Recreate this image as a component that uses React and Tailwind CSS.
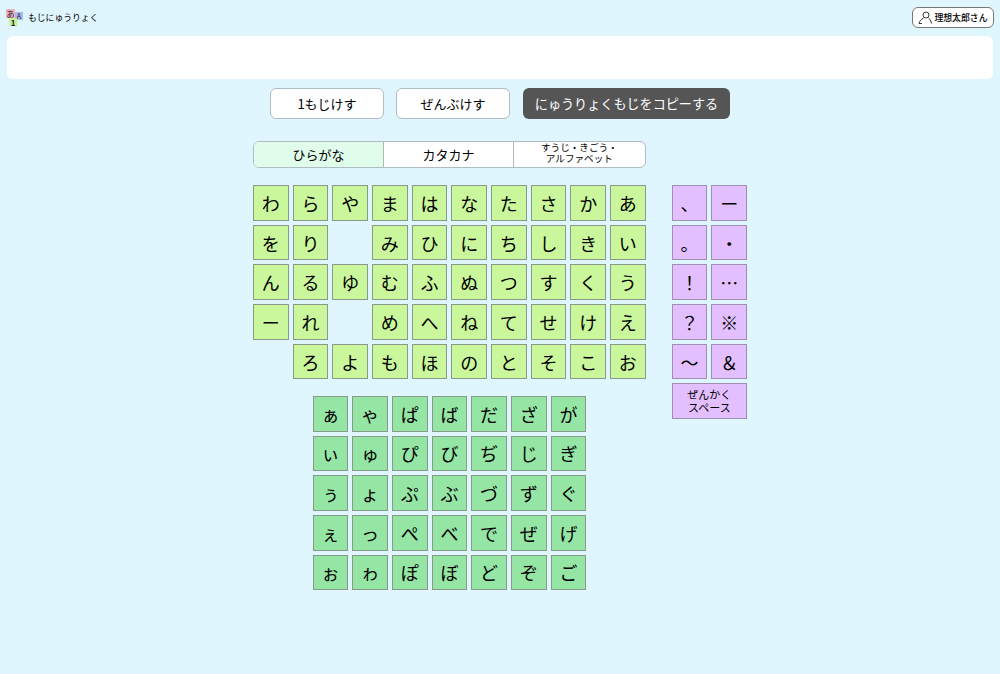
const MAIN = [
  ['わ', 'ら', 'や', 'ま', 'は', 'な', 'た', 'さ', 'か', 'あ'],
  ['を', 'り', '', 'み', 'ひ', 'に', 'ち', 'し', 'き', 'い'],
  ['ん', 'る', 'ゆ', 'む', 'ふ', 'ぬ', 'つ', 'す', 'く', 'う'],
  ['ー', 'れ', '', 'め', 'へ', 'ね', 'て', 'せ', 'け', 'え'],
  ['', 'ろ', 'よ', 'も', 'ほ', 'の', 'と', 'そ', 'こ', 'お'],
]

const SMALL = [
  ['ぁ', 'ゃ', 'ぱ', 'ば', 'だ', 'ざ', 'が'],
  ['ぃ', 'ゅ', 'ぴ', 'び', 'ぢ', 'じ', 'ぎ'],
  ['ぅ', 'ょ', 'ぷ', 'ぶ', 'づ', 'ず', 'ぐ'],
  ['ぇ', 'っ', 'ぺ', 'べ', 'で', 'ぜ', 'げ'],
  ['ぉ', 'ゎ', 'ぽ', 'ぼ', 'ど', 'ぞ', 'ご'],
]

const SYMBOLS = ['、', 'ー', '。', '・', '！', '…', '？', '※', '～', '＆']

function Key({ label, color }) {
  if (!label) return <div className="aspect-square" />
  return (
    <button className={`aspect-square flex items-center justify-center border text-[18px] leading-none text-black ${color}`}>
      {label}
    </button>
  )
}

function Logo() {
  return (
    <svg width="20" height="20" viewBox="0 0 20 20" className="shrink-0 -ml-px">
      <rect x="9" y="4" width="8" height="8" fill="#a8b8f0" />
      <rect x="0" y="1" width="9" height="9" fill="#f0b0c0" />
      <rect x="3" y="10" width="8.5" height="8" fill="#c8f09a" />
      <text x="4.5" y="8.5" fontSize="8" textAnchor="middle" fill="#222">あ</text>
      <text x="13" y="11" fontSize="7" textAnchor="middle" fill="#222">A</text>
      <text x="7.2" y="17.5" fontSize="8" textAnchor="middle" fontWeight="700" fill="#222">1</text>
    </svg>
  )
}

export default function App() {
  return (
    <div className="min-h-screen bg-[#e0f6ff] text-black font-['Noto_Sans_CJK_JP','Noto_Sans',sans-serif]">
      <header className="h-9 pl-[7px] pr-[6px] flex items-center justify-between">
        <div className="flex items-center gap-[2px]">
          <Logo />
          <span className="text-[8.8px] leading-none">もじにゅうりょく</span>
        </div>
        <button className="h-[21px] w-[82px] mt-[-1px] flex items-center justify-center gap-[2px] rounded-md border border-[#777] bg-white text-[8.9px] font-medium">
          <svg width="14" height="14" viewBox="0 0 14 14" fill="none" stroke="#222" strokeWidth="0.9">
            <circle cx="8" cy="4" r="3" />
            <path d="M5.5 7C3.5 8 1.5 10 1 12.5H4M10.5 7C12 8 13 10 13.5 12.5" />
          </svg>
          理想太郎さん
        </button>
      </header>

      <div className="mx-[7px] h-[43px] rounded-md bg-white" />

      <div className="mt-[9px] flex justify-center gap-3">
        <button className="h-[31px] w-[114px] rounded-md border border-[#b0bcc4] bg-white text-[13px]">1もじけす</button>
        <button className="h-[31px] w-[114px] rounded-md border border-[#b0bcc4] bg-white text-[13px]">ぜんぶけす</button>
        <button className="ml-px h-[31px] w-[207px] rounded-md bg-[#555] text-white text-[13.1px]">にゅうりょくもじをコピーする</button>
      </div>

      <div className="mt-[22px] w-[494px] mx-auto flex justify-between items-start">
        <div className="w-[392.7px]">
          <div className="h-[27px] flex rounded-md border border-[#b0bcc4] bg-white overflow-hidden">
            <button className="w-[130px] bg-[#e0fdeb] text-[13px] border-r border-[#b0b8b8]">ひらがな</button>
            <button className="w-[130px] text-[13px] border-r border-[#b0b8b8]">カタカナ</button>
            <button className="flex-1 text-[9.6px] leading-[11px] pb-[3px]">すうじ・きごう・<br />アルファベット</button>
          </div>

          <div className="mt-[17px] grid grid-cols-10 gap-1">
            {MAIN.flat().map((k, i) => <Key key={i} label={k} color="bg-[#caf79b] border-[#8a9a8a]" />)}
          </div>

          <div className="mt-[16.5px] ml-[59.6px] w-[273.7px] grid grid-cols-7 gap-1">
            {SMALL.flat().map(k => <Key key={k} label={k} color="bg-[#95e5a5] border-[#8a9a8a]" />)}
          </div>
        </div>

        <div className="mt-[44px] w-[75.34px] grid grid-cols-2 gap-1">
          {SYMBOLS.map(k => <Key key={k} label={k} color="bg-[#e3bfff] border-[#a090b0]" />)}
          <button className="col-span-2 h-[36px] flex items-center justify-center border border-[#a090b0] bg-[#e3bfff] text-[11px] leading-[13px]">
            ぜんかく<br />スペース
          </button>
        </div>
      </div>
    </div>
  )
}
